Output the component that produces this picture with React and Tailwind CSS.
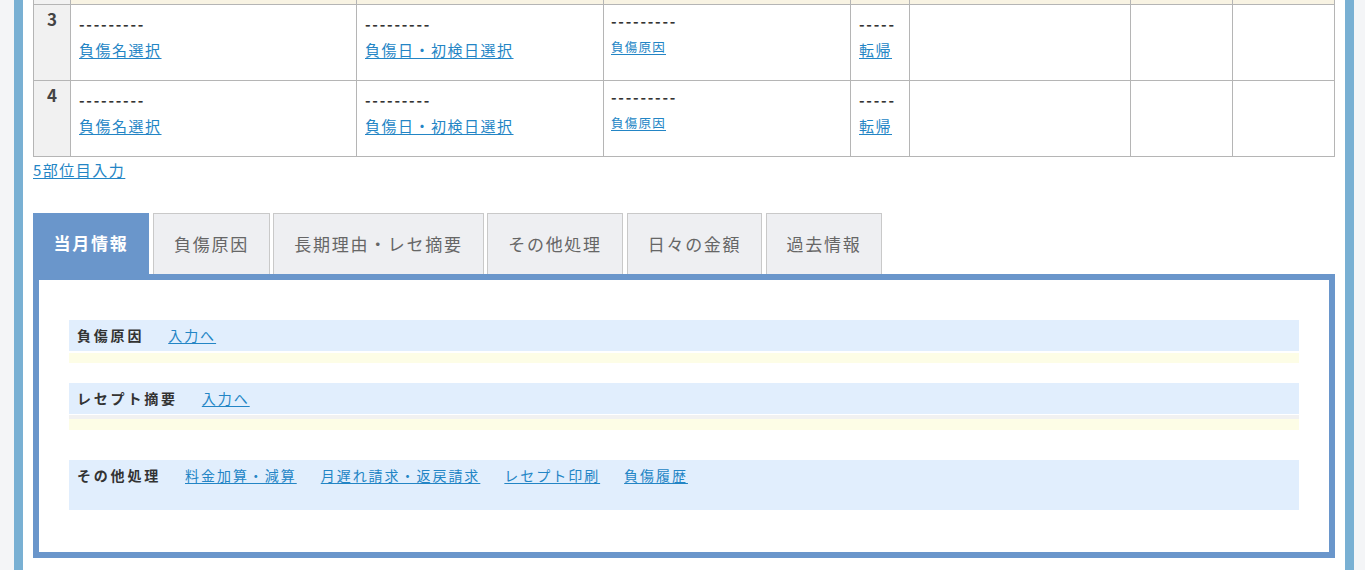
import React from "react";

const rows = [3, 4];
const tabs = [
  { label: "当月情報", cls: "w-[116px]", active: true },
  { label: "負傷原因", cls: "w-[117px] ml-[4px]" },
  { label: "長期理由・レセ摘要", cls: "w-[211px] ml-[3px]" },
  { label: "その他処理", cls: "w-[136px] ml-[3px]" },
  { label: "日々の金額", cls: "w-[135px] ml-[4px]" },
  { label: "過去情報", cls: "w-[116px] ml-[4px]" },
];

function Link({ children, className = "" }) {
  return (
    <a href="#" className={"text-[#2385c5] underline underline-offset-2 decoration-1 " + className}>
      {children}
    </a>
  );
}

export default function App() {
  return (
    <div
      className="w-[1365px] h-[570px] overflow-hidden bg-[#f4f5f7] pl-[14px] pr-[11px]"
      style={{ fontFamily: '"Noto Sans CJK JP", "Noto Sans", sans-serif' }}
    >
      <div className="h-full border-x-[9px] border-[#79b0d3] bg-white px-[10px]">
        <table className="w-[1302px] table-fixed border-collapse text-[#333]">
          <colgroup>
            <col className="w-[37px]" />
            <col className="w-[286px]" />
            <col className="w-[247px]" />
            <col className="w-[247px]" />
            <col className="w-[59px]" />
            <col className="w-[221px]" />
            <col className="w-[102px]" />
            <col className="w-[102px]" />
          </colgroup>
          <thead>
            <tr className="h-[4px]">
              <th className="border-x border-b border-[#b5b5b5] bg-[#f2f2f2] p-0"></th>
              {[0, 1, 2, 3, 4, 5, 6].map((i) => (
                <th key={i} className="border-x border-b border-[#b5b5b5] bg-[#f8f3e3] p-0"></th>
              ))}
            </tr>
          </thead>
          <tbody>
            {rows.map((n) => (
              <tr key={n} className="h-[76px]">
                <td className="border border-[#b5b5b5] bg-[#f1f1f1] align-top text-center pt-[1px] text-[17px] leading-[26px] font-bold text-[#444]">
                  {n}
                </td>
                <td className="border border-[#b5b5b5] align-top pl-[8px] pt-[6px] text-[15px] leading-[26px] tracking-[0.1em]">
                  <div className="font-bold text-[#333] tracking-[0.12em]">---------</div>
                  <Link>負傷名選択</Link>
                </td>
                <td className="border border-[#b5b5b5] align-top pl-[8px] pt-[6px] text-[15px] leading-[26px] tracking-[0.1em]">
                  <div className="font-bold text-[#333] tracking-[0.12em]">---------</div>
                  <Link>負傷日・初検日選択</Link>
                </td>
                <td className="border border-[#b5b5b5] align-top pl-[7px] pt-[3px] text-[12.5px] leading-[26px] tracking-[0.1em]">
                  <div className="font-bold text-[15px] text-[#333] tracking-[0.12em]">---------</div>
                  <Link>負傷原因</Link>
                </td>
                <td className="border border-[#b5b5b5] align-top pl-[8px] pt-[6px] text-[15px] leading-[26px] tracking-[0.1em]">
                  <div className="font-bold text-[#333] tracking-[0.12em]">-----</div>
                  <Link>転帰</Link>
                </td>
                <td className="border border-[#b5b5b5]"></td>
                <td className="border border-[#b5b5b5]"></td>
                <td className="border border-[#b5b5b5]"></td>
              </tr>
            ))}
          </tbody>
        </table>

        <div className="pt-[2px] text-[15px] leading-[22px] tracking-[0.1em]">
          <Link>5部位目入力</Link>
        </div>

        <div className="mt-[32px] flex">
          {tabs.map((t) =>
            t.active ? (
              <div
                key={t.label}
                className={`${t.cls} h-[61px] flex items-center justify-center bg-[#6a96cb] text-white font-bold text-[17px] tracking-[0.1em]`}
              >
                {t.label}
              </div>
            ) : (
              <div
                key={t.label}
                className={`${t.cls} h-[61px] flex items-center justify-center bg-[#eeeff2] border border-b-0 border-[#c9c9c9] text-[#666] text-[17px] tracking-[0.1em]`}
              >
                {t.label}
              </div>
            )
          )}
        </div>

        <div className="w-[1302px] border-[6px] border-[#6a96cb] px-[30px] pt-[40px] pb-[42px] text-[14px]">
          <div className="bg-[#e1eefd] h-[31px] px-[8px] flex items-center">
            <span className="font-bold text-[#333] tracking-[0.2em]">負傷原因</span>
            <Link className="ml-[24px] tracking-[0.14em]">入力へ</Link>
          </div>
          <div className="mt-[2px] h-[10px] bg-[#fdfde6]"></div>

          <div className="mt-[20px] bg-[#e1eefd] h-[31px] px-[8px] flex items-center">
            <span className="font-bold text-[#333] tracking-[0.2em]">レセプト摘要</span>
            <Link className="ml-[24px] tracking-[0.14em]">入力へ</Link>
          </div>
          <div className="mt-[1px] h-[4px] bg-[#f1f1f1]"></div>
          <div className="h-[11px] bg-[#fdfde6]"></div>

          <div className="mt-[30px] bg-[#e1eefd] h-[50px] px-[8px]">
            <div className="h-[31px] flex items-center">
              <span className="font-bold text-[#333] tracking-[0.2em]">その他処理</span>
              <Link className="ml-[24px] tracking-[0.14em]">料金加算・減算</Link>
              <Link className="ml-[24px] tracking-[0.14em]">月遅れ請求・返戻請求</Link>
              <Link className="ml-[24px] tracking-[0.14em]">レセプト印刷</Link>
              <Link className="ml-[24px] tracking-[0.14em]">負傷履歴</Link>
            </div>
          </div>
        </div>
      </div>
    </div>
  );
}
